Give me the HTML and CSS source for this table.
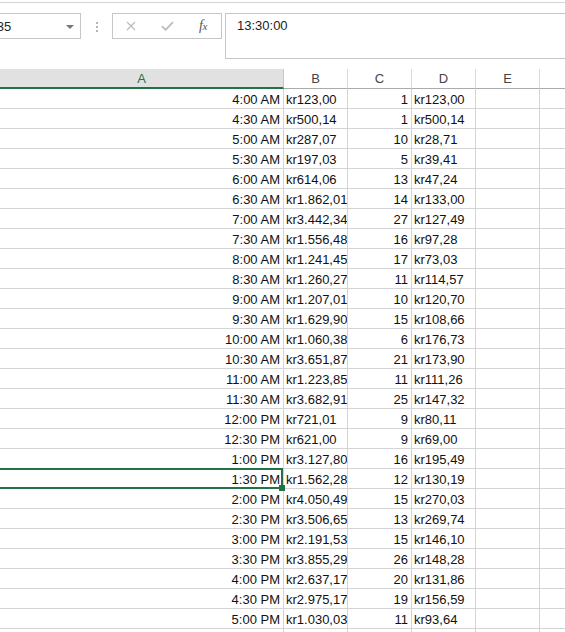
FILE: index.html
```html
<!DOCTYPE html>
<html>
<head>
<meta charset="utf-8">
<link rel="stylesheet" href="styles.css">
</head>
<body>
<div class="topline"></div>
<div class="fbar">
  <div class="namebox"><span class="nb-text">A35</span><span class="nb-arrow"></span></div>
  <div class="grip"><i></i><i></i><i></i></div>
  <div class="btns">
    <span class="btn"><svg width="10" height="10" viewBox="0 0 10 10"><path d="M1 1L9 9M9 1L1 9" stroke="#bcbcbc" stroke-width="1.3" fill="none"/></svg></span>
    <span class="btn"><svg width="13" height="10" viewBox="0 0 13 10"><path d="M1 5.2L4.6 8.8L12 1.2" stroke="#bcbcbc" stroke-width="1.8" fill="none"/></svg></span>
    <span class="btn fx"><i>f<span class="fx-x">x</span></i></span>
  </div>
  <div class="fbox">13:30:00</div>
</div>
<div class="sheet">
  <div class="row hdr">
    <div class="ch sel">A</div><div class="ch">B</div><div class="ch">C</div><div class="ch">D</div><div class="ch">E</div><div class="ch last"></div>
  </div>
  <div class="row"><div class="c r">4:00 AM</div><div class="c">kr123,00</div><div class="c r">1</div><div class="c">kr123,00</div><div class="c"></div><div class="c last"></div></div>
  <div class="row"><div class="c r">4:30 AM</div><div class="c">kr500,14</div><div class="c r">1</div><div class="c">kr500,14</div><div class="c"></div><div class="c last"></div></div>
  <div class="row"><div class="c r">5:00 AM</div><div class="c">kr287,07</div><div class="c r">10</div><div class="c">kr28,71</div><div class="c"></div><div class="c last"></div></div>
  <div class="row"><div class="c r">5:30 AM</div><div class="c">kr197,03</div><div class="c r">5</div><div class="c">kr39,41</div><div class="c"></div><div class="c last"></div></div>
  <div class="row"><div class="c r">6:00 AM</div><div class="c">kr614,06</div><div class="c r">13</div><div class="c">kr47,24</div><div class="c"></div><div class="c last"></div></div>
  <div class="row"><div class="c r">6:30 AM</div><div class="c">kr1.862,01</div><div class="c r">14</div><div class="c">kr133,00</div><div class="c"></div><div class="c last"></div></div>
  <div class="row"><div class="c r">7:00 AM</div><div class="c">kr3.442,34</div><div class="c r">27</div><div class="c">kr127,49</div><div class="c"></div><div class="c last"></div></div>
  <div class="row"><div class="c r">7:30 AM</div><div class="c">kr1.556,48</div><div class="c r">16</div><div class="c">kr97,28</div><div class="c"></div><div class="c last"></div></div>
  <div class="row"><div class="c r">8:00 AM</div><div class="c">kr1.241,45</div><div class="c r">17</div><div class="c">kr73,03</div><div class="c"></div><div class="c last"></div></div>
  <div class="row"><div class="c r">8:30 AM</div><div class="c">kr1.260,27</div><div class="c r">11</div><div class="c">kr114,57</div><div class="c"></div><div class="c last"></div></div>
  <div class="row"><div class="c r">9:00 AM</div><div class="c">kr1.207,01</div><div class="c r">10</div><div class="c">kr120,70</div><div class="c"></div><div class="c last"></div></div>
  <div class="row"><div class="c r">9:30 AM</div><div class="c">kr1.629,90</div><div class="c r">15</div><div class="c">kr108,66</div><div class="c"></div><div class="c last"></div></div>
  <div class="row"><div class="c r">10:00 AM</div><div class="c">kr1.060,38</div><div class="c r">6</div><div class="c">kr176,73</div><div class="c"></div><div class="c last"></div></div>
  <div class="row"><div class="c r">10:30 AM</div><div class="c">kr3.651,87</div><div class="c r">21</div><div class="c">kr173,90</div><div class="c"></div><div class="c last"></div></div>
  <div class="row"><div class="c r">11:00 AM</div><div class="c">kr1.223,85</div><div class="c r">11</div><div class="c">kr111,26</div><div class="c"></div><div class="c last"></div></div>
  <div class="row"><div class="c r">11:30 AM</div><div class="c">kr3.682,91</div><div class="c r">25</div><div class="c">kr147,32</div><div class="c"></div><div class="c last"></div></div>
  <div class="row"><div class="c r">12:00 PM</div><div class="c">kr721,01</div><div class="c r">9</div><div class="c">kr80,11</div><div class="c"></div><div class="c last"></div></div>
  <div class="row"><div class="c r">12:30 PM</div><div class="c">kr621,00</div><div class="c r">9</div><div class="c">kr69,00</div><div class="c"></div><div class="c last"></div></div>
  <div class="row"><div class="c r">1:00 PM</div><div class="c">kr3.127,80</div><div class="c r">16</div><div class="c">kr195,49</div><div class="c"></div><div class="c last"></div></div>
  <div class="row"><div class="c r active">1:30 PM</div><div class="c">kr1.562,28</div><div class="c r">12</div><div class="c">kr130,19</div><div class="c"></div><div class="c last"></div></div>
  <div class="row"><div class="c r">2:00 PM</div><div class="c">kr4.050,49</div><div class="c r">15</div><div class="c">kr270,03</div><div class="c"></div><div class="c last"></div></div>
  <div class="row"><div class="c r">2:30 PM</div><div class="c">kr3.506,65</div><div class="c r">13</div><div class="c">kr269,74</div><div class="c"></div><div class="c last"></div></div>
  <div class="row"><div class="c r">3:00 PM</div><div class="c">kr2.191,53</div><div class="c r">15</div><div class="c">kr146,10</div><div class="c"></div><div class="c last"></div></div>
  <div class="row"><div class="c r">3:30 PM</div><div class="c">kr3.855,29</div><div class="c r">26</div><div class="c">kr148,28</div><div class="c"></div><div class="c last"></div></div>
  <div class="row"><div class="c r">4:00 PM</div><div class="c">kr2.637,17</div><div class="c r">20</div><div class="c">kr131,86</div><div class="c"></div><div class="c last"></div></div>
  <div class="row"><div class="c r">4:30 PM</div><div class="c">kr2.975,17</div><div class="c r">19</div><div class="c">kr156,59</div><div class="c"></div><div class="c last"></div></div>
  <div class="row"><div class="c r">5:00 PM</div><div class="c">kr1.030,03</div><div class="c r">11</div><div class="c">kr93,64</div><div class="c"></div><div class="c last"></div></div>
  <div class="row"><div class="c r"></div><div class="c"></div><div class="c r"></div><div class="c"></div><div class="c"></div><div class="c last"></div></div>
</div>
</body>
</html>
```
FILE: styles.css
```css
html, body {
  margin: 0;
  padding: 0;
  background: #fff;
  overflow: hidden;
  width: 565px;
  height: 632px;
}
body {
  font-family: "Liberation Sans", Arial, sans-serif;
  font-size: 13px;
  color: #111;
}
.topline {
  height: 2px;
  border-bottom: 1px solid #d4d4d4;
}
.fbar {
  display: flex;
  align-items: flex-start;
  padding-top: 10px;
  height: 56px;
  box-sizing: border-box;
}
.namebox {
  margin-left: -20px;
  width: 101px;
  height: 26px;
  flex: none;
  box-sizing: border-box;
  border: 1px solid #c6c6c6;
  display: flex;
  align-items: center;
  justify-content: space-between;
  padding: 0 6px 0 7px;
  color: #222;
}
.nb-arrow {
  width: 0;
  height: 0;
  border-left: 4px solid transparent;
  border-right: 4px solid transparent;
  border-top: 4px solid #777;
  margin-top: 1px;
}
.grip {
  margin-left: 15px;
  margin-top: 9px;
  width: 2px;
  flex: none;
  display: flex;
  flex-direction: column;
  gap: 2px;
}
.grip i {
  display: block;
  width: 2px;
  height: 2px;
  background: #b5b5b5;
}
.btns {
  margin-left: 14px;
  width: 110px;
  height: 26px;
  flex: none;
  box-sizing: border-box;
  border: 1px solid #c6c6c6;
  display: flex;
}
.btn {
  width: 36px;
  display: flex;
  align-items: center;
  justify-content: center;
}
.fx i {
  font-family: "Liberation Serif", "Times New Roman", serif;
  font-style: italic;
  font-size: 14px;
  color: #555;
  letter-spacing: -0.5px;
}
.fx-x {
  font-size: 11px;
}
.fbox {
  margin-left: 3px;
  margin-right: -20px;
  flex: 1;
  height: 46px;
  box-sizing: border-box;
  border: 1px solid #c6c6c6;
  padding: 3px 11px;
  line-height: 18px;
  color: #222;
}
.sheet {
  margin-top: 10px;
}
.row {
  display: grid;
  grid-template-columns: 284px 64px 64px 64px 64px 1fr;
  height: 20px;
}
.ch {
  box-sizing: border-box;
  height: 20px;
  border-right: 1px solid #dadada;
  border-bottom: 1px solid #ababab;
  text-align: center;
  color: #444;
  padding-top: 1px;
  line-height: 18px;
}
.ch.sel {
  background: #e1e1e1;
  color: #217346;
  border-bottom: 2px solid #217346;
  border-right-color: #c8c8c8;
}
.c {
  box-sizing: border-box;
  height: 20px;
  border-right: 1px solid #d4d4d4;
  border-bottom: 1px solid #d4d4d4;
  padding: 3px 0 0 2px;
  line-height: 16px;
  white-space: nowrap;
  overflow: hidden;
}
.c.r {
  text-align: right;
  padding: 3px 3px 0 0;
}
.last {
  border-right: none;
}
.c.active {
  position: relative;
  overflow: visible;
}
.c.active::before {
  content: "";
  position: absolute;
  left: -3px;
  right: 0;
  top: -1px;
  bottom: -1px;
  border: 2px solid #217346;
}
.c.active::after {
  content: "";
  position: absolute;
  width: 6px;
  height: 6px;
  right: -2px;
  bottom: -3px;
  background: #217346;
}
```
